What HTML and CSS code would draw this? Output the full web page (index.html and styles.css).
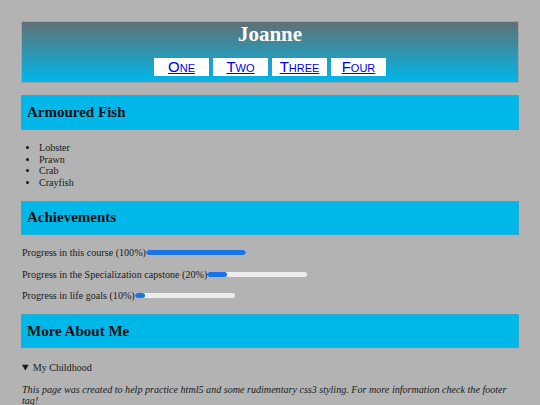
FILE: index.html
```html
<!DOCTYPE html>
<html lang="en">
<head>
<meta charset="utf-8">
<title>Joanne</title>
<link rel="stylesheet" href="styles.css">
</head>
<body>
<div class="page">
  <header class="masthead">
    <h1 class="title">Joanne</h1>
    <nav class="nav">
      <a class="nav-link" href="#one">One</a>
      <a class="nav-link" href="#two">Two</a>
      <a class="nav-link" href="#three">Three</a>
      <a class="nav-link" href="#four">Four</a>
    </nav>
  </header>

  <section class="section">
    <h2 class="section-title">Armoured Fish</h2>
    <ul class="list">
      <li>Lobster</li>
      <li>Prawn</li>
      <li>Crab</li>
      <li>Crayfish</li>
    </ul>
  </section>

  <section class="section">
    <h2 class="section-title">Achievements</h2>
    <p class="progress-row">Progress in this course (100%)<span class="bar"><span class="bar-fill" style="width:100%"></span></span></p>
    <p class="progress-row">Progress in the Specialization capstone (20%)<span class="bar"><span class="bar-fill" style="width:20%"></span></span></p>
    <p class="progress-row">Progress in life goals (10%)<span class="bar"><span class="bar-fill" style="width:10%"></span></span></p>
  </section>

  <section class="section">
    <h2 class="section-title">More About Me</h2>
    <details class="details" open>
      <summary>My Childhood</summary>
    </details>
  </section>

  <footer class="footer">
    <p class="footer-text">This page was created to help practice html5 and some rudimentary css3 styling. For more information check the footer tag!</p>
  </footer>
</div>
</body>
</html>
```

FILE: styles.css
```css
html, body {
  margin: 0;
  padding: 0;
}

body {
  background: #b3b3b3;
  font-family: "Liberation Serif", "Times New Roman", serif;
  font-size: 10.1px;
  line-height: 11.5px;
  color: #1a1a1a;
}

.page {
  padding: 21px 21px 0 22px;
}

.masthead {
  margin-left: -1px;
  border: 1px solid #a4a4a4;
  background: linear-gradient(#617073, #00b7ea);
  display: flex;
  flex-direction: column;
  align-items: center;
  padding: 0 0 6px;
}

.title {
  margin: 0;
  font-size: 21px;
  line-height: 24px;
  font-weight: bold;
  color: #ffffff;
}

.nav {
  margin-top: 12px;
  display: flex;
  gap: 4px;
}

.nav-link {
  display: block;
  width: 55px;
  height: 18px;
  line-height: 18px;
  background: #ffffff;
  text-align: center;
  font-family: "Liberation Sans", Arial, sans-serif;
  font-size: 15px;
  font-variant: small-caps;
  color: #0000ee;
  text-decoration: underline;
}

.section-title {
  margin: 12.45px 0 12.45px -1px;
  padding: 7.5px 5px;
  border: 1px solid #2fa9d2;
  background: #00b7ea;
  font-size: 15px;
  line-height: 17.25px;
  font-weight: bold;
  color: #111111;
}

.list {
  margin: 10px 0;
  padding-left: 17px;
}

.progress-row {
  margin: 10px 0;
}

.bar {
  display: inline-block;
  vertical-align: middle;
  width: 100px;
  height: 5px;
  border-radius: 3px;
  background: #ededed;
  overflow: hidden;
  position: relative;
  top: -1px;
}

.bar-fill {
  display: block;
  height: 100%;
  border-radius: 3px;
  background: #1a73e8;
}

.details {
  margin: 14px 0 10px;
}

.details summary {
  cursor: pointer;
}

.footer-text {
  margin: 10px 0;
  font-style: italic;
}
```
